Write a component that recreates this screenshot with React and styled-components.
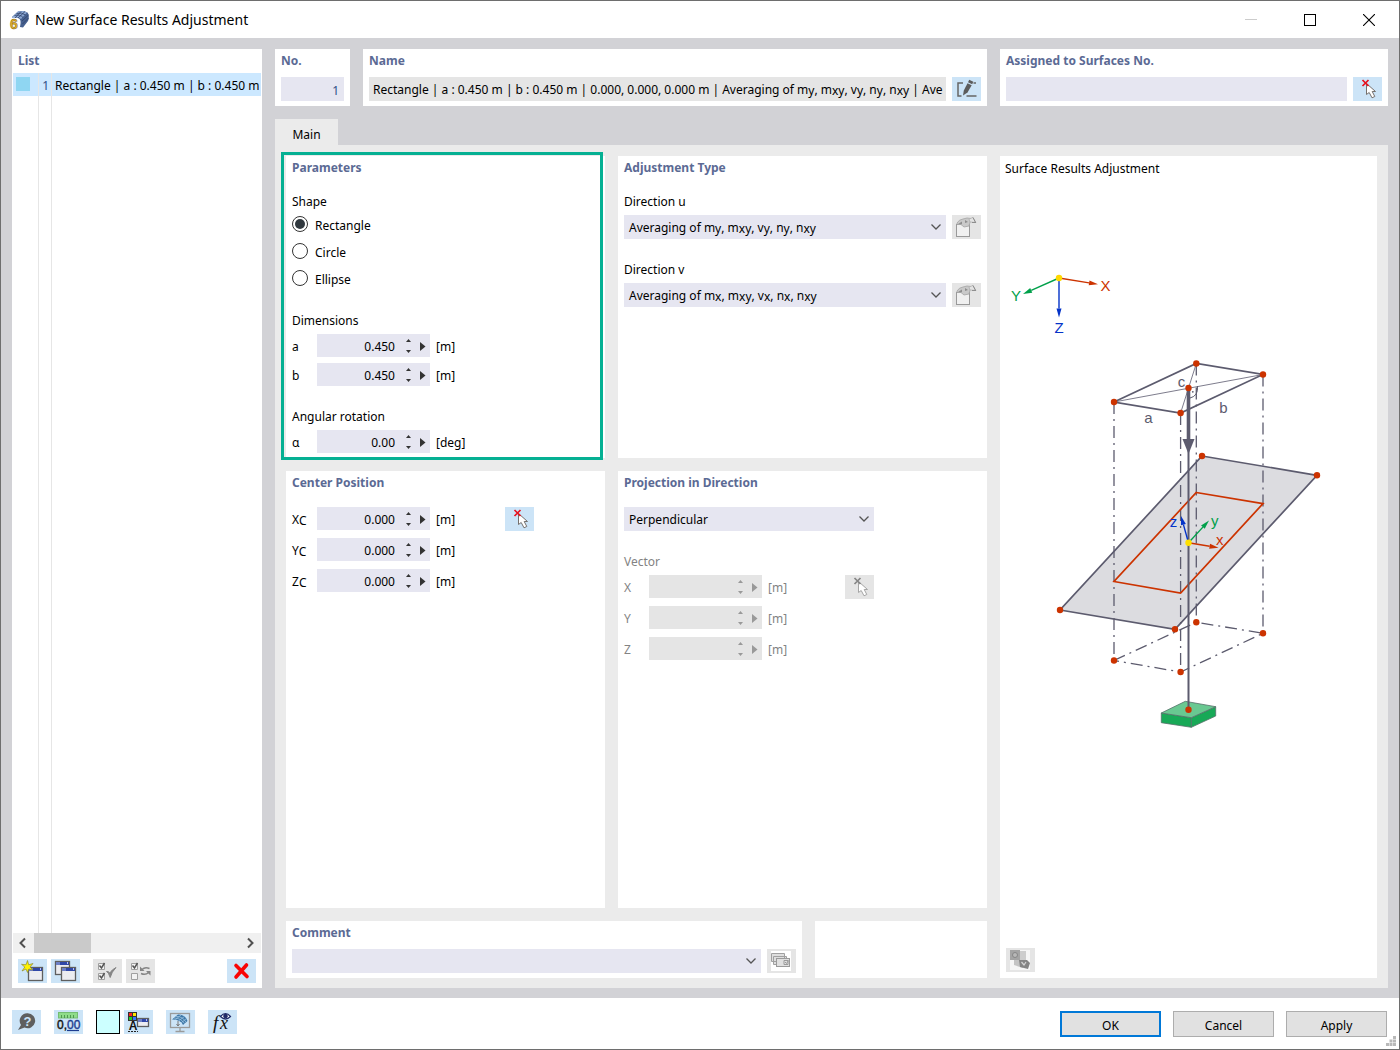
import React, { useState } from "react";
import styled, { createGlobalStyle, css } from "styled-components";

const color = {
  frame: "#6e6e6e",
  backdrop: "#d2d2d6",
  page: "#ebebeb",
  field: "#e6e6f1",
  disabled: "#e5e5e5",
  accent: "#cce4f7",
  heading: "#5b6a94",
  line: "#5c5b6e",
  red: "#cc3300",
  green: "#00a04a",
  blue: "#0433c8",
};

const GlobalStyle = createGlobalStyle`
  * { box-sizing: border-box; }
  body { margin: 0; }
  body, button, input, select {
    font-family: "Noto Sans", "Open Sans", sans-serif;
    font-size: 12px;
    line-height: 20px;
    color: #000;
  }
  svg { display: block; }
`;

const Window = styled.div`
  display: flex;
  flex-direction: column;
  min-height: 100vh;
  border: 1px solid ${color.frame};
  background: #fff;
`;

const TitleBar = styled.header`
  display: flex;
  align-items: center;
  height: 37px;
  padding: 0 7px 0 8px;
  gap: 5px;
`;

const Title = styled.h1`
  flex: 1;
  margin: 0;
  font-size: 14px;
  font-weight: 400;
`;

const CaptionButton = styled.button`
  display: grid;
  place-items: center;
  width: 46px;
  height: 36px;
  margin-left: 8px;
  padding: 0;
  border: 0;
  background: none;
`;

const Body = styled.main`
  flex: 1;
  display: grid;
  grid-template-columns: 250px 1fr;
  gap: 13px;
  padding: 11px 11px 10px;
  background: ${color.backdrop};
`;

const Editor = styled.div`
  display: flex;
  flex-direction: column;
  min-width: 0;
`;

const TopRow = styled.div`
  display: grid;
  grid-template-columns: 75px minmax(0, 624fr) minmax(0, 388fr);
  gap: 13px;
  margin-bottom: 13px;
`;

const Panel = styled.section`
  position: relative;
  min-width: 0;
  padding: 0 6px 5px;
  background: #fff;
  ${(p) =>
    p.$highlight &&
    css`
      &::after {
        content: "";
        position: absolute;
        inset: -4px 2px -2px -5px;
        border: 3px solid #05b093;
        pointer-events: none;
      }
    `}
`;

const Heading = styled.h2`
  margin: 0;
  font-size: 12px;
  line-height: 24px;
  font-weight: 700;
  color: ${color.heading};
  margin-bottom: ${(p) => (p.$wide ? "12px" : "4px")};
`;

const HeadingLabel = styled.label`
  display: block;
`;

const Line = styled.div`
  display: flex;
  gap: 6px;
`;

const TextInput = styled.input`
  flex: 1;
  min-width: 0;
  height: 24px;
  padding: 2px 5px 0;
  border: 0;
  border-radius: 0;
  background: ${color.field};
  text-align: ${(p) => (p.$number ? "right" : "left")};
  color: ${(p) => (p.$number ? "#2f4f86" : "#000")};
`;

const NameOutput = styled.output`
  flex: 1;
  min-width: 0;
  height: 24px;
  padding: 0 4px;
  line-height: 25px;
  background: ${color.disabled};
  white-space: nowrap;
  overflow: hidden;
`;

const IconButton = styled.button`
  flex: none;
  display: grid;
  place-items: center;
  width: 29px;
  height: 24px;
  padding: 0;
  border: 0;
  background: ${(p) => (p.disabled ? color.disabled : color.accent)};
`;

const Tabs = styled.div`
  display: flex;
`;

const Tab = styled.button`
  height: 26px;
  width: 63px;
  padding: 5px 0 0;
  border: 0;
  background: ${color.page};
`;

const Page = styled.div`
  flex: 1;
  display: grid;
  grid-template-columns: minmax(0, 701fr) minmax(0, 377fr);
  gap: 13px;
  padding: 11px 11px 10px;
  background: ${color.page};
`;

const Forms = styled.div`
  display: grid;
  grid-template-columns: minmax(0, 319fr) minmax(0, 369fr);
  grid-template-rows: auto 1fr auto;
  gap: 13px;
`;

const CommentRow = styled.div`
  grid-column: 1 / -1;
  display: grid;
  grid-template-columns: minmax(0, 516fr) minmax(0, 172fr);
  gap: 13px;
`;

const Caption = styled.div`
  display: block;
  margin-bottom: ${(p) => (p.$tight ? "0" : "3px")};
  color: ${(p) => (p.$muted ? "#838383" : "#000")};
`;

const Group = styled.div`
  margin-top: ${(p) => (p.$close ? "18px" : "21px")};
`;

const RadioLine = styled.label`
  display: flex;
  align-items: flex-start;
  gap: 7px;
  height: 27px;
  padding-top: 4px;
`;

const Radio = styled.input`
  appearance: none;
  display: grid;
  place-items: center;
  width: 16px;
  height: 16px;
  margin: 0;
  border: 1px solid #333;
  border-radius: 50%;
  &:checked::before {
    content: "";
    width: 10px;
    height: 10px;
    border-radius: 50%;
    background: #30383e;
  }
`;

const ValueRows = styled.div`
  display: grid;
  gap: ${(p) => (p.$dense ? "6px" : "8px")};
`;

const ValueLine = styled.div`
  display: grid;
  grid-template-columns: 25px 113px ${(p) => p.$unit || 75}px 29px;
  height: 23px;
  line-height: 26px;
  color: ${(p) => (p.$muted ? "#838383" : "#000")};
`;

const Unit = styled.span`
  padding-left: 6px;
`;

const SpinBox = styled.div`
  display: grid;
  grid-template-columns: 1fr 18px 13px;
  height: 23px;
  padding-top: 1px;
  background: ${(p) => (p.$disabled ? color.disabled : color.field)};
  color: ${(p) => (p.$disabled ? "#999" : "#333")};
`;

const SpinInput = styled.input`
  width: 100%;
  min-width: 0;
  height: 22px;
  padding: 0 4px 0 0;
  border: 0;
  background: transparent;
  text-align: right;
`;

const Steps = styled.div`
  display: grid;
  grid-template-rows: 11px 11px;
`;

const StepButton = styled.button`
  display: grid;
  place-items: center;
  padding: 0;
  border: 0;
  background: none;
  color: inherit;
`;

const SelectBox = styled.div`
  display: grid;
  flex: ${(p) => (p.$width ? "none" : 1)};
  width: ${(p) => (p.$width ? p.$width + "px" : "auto")};
  min-width: 0;
  height: 24px;
  background: ${color.field};
  & > * {
    grid-area: 1 / 1;
  }
  svg {
    justify-self: end;
    align-self: center;
    margin-right: 4px;
    pointer-events: none;
  }
`;

const Select = styled.select`
  appearance: none;
  width: 100%;
  height: 24px;
  padding: 2px 24px 0 5px;
  border: 0;
  border-radius: 0;
  background: transparent;
  color: ${(p) => (p.$rich ? "transparent" : "#000")};
  option {
    color: #000;
  }
`;

const SelectText = styled.span`
  padding-left: 5px;
  line-height: 26px;
  height: 24px;
  white-space: nowrap;
  overflow: hidden;
  pointer-events: none;
`;

const Sub = styled.sub`
  font-size: 12px;
  line-height: 0;
  vertical-align: -1px;
`;

const ListPanel = styled.section`
  display: flex;
  flex-direction: column;
  padding: 0 1px 5px;
  background: #fff;
  min-width: 0;
`;

const ListHeading = styled(Heading)`
  margin: 0;
  padding-left: 5px;
`;

const ListItems = styled.ul`
  flex: 1;
  display: flex;
  flex-direction: column;
  margin: 0;
  padding: 0;
  list-style: none;
`;

const ListRow = styled.li`
  display: grid;
  grid-template-columns: 26px 13px minmax(0, 1fr);
  ${(p) => (p.$filler ? "flex: 1;" : "height: 23px; line-height: 25px; background: #cce8ff;")}
`;

const ListCell = styled.span`
  border-right: ${(p) => (p.$last ? "0" : "1px solid #e6e6e6")};
  padding-left: ${(p) => (p.$last ? "3px" : "0")};
  color: ${(p) => (p.$index ? "#2f4f86" : "#000")};
  text-align: ${(p) => (p.$index ? "right" : "left")};
  padding-right: ${(p) => (p.$index ? "2px" : "0")};
  white-space: nowrap;
  overflow: hidden;
`;

const Swatch = styled.span`
  display: block;
  width: 14px;
  height: 14px;
  margin: 4px 0 0 3px;
  background: #8fd6f2;
`;

const ScrollBar = styled.div`
  display: grid;
  grid-template-columns: 21px 57px 1fr 21px;
  height: 20px;
  margin-bottom: 6px;
  background: #f0f0f0;
`;

const ScrollThumb = styled.div`
  background: #cacaca;
`;

const ListTools = styled.div`
  display: flex;
  gap: 4px;
  padding: 0 5px;
`;

const Gap = styled.span`
  ${(p) => (p.$grow ? "flex: 1;" : "width: 5px;")}
`;

const Preview = styled.section`
  display: flex;
  flex-direction: column;
  min-width: 0;
  padding-bottom: 6px;
  background: #fff;
`;

const PreviewTitle = styled.div`
  padding: 0 5px;
  line-height: 25px;
`;

const Drawing = styled.svg`
  flex: 1;
  width: 100%;
`;

const PreviewTools = styled.div`
  padding-left: 6px;
`;

const Footer = styled.footer`
  display: flex;
  gap: 13px;
  align-items: center;
  height: 51px;
  padding: 0 12px 3px 11px;
`;

const FooterPair = styled.div`
  display: flex;
  gap: 4px;
`;

const ColorButton = styled.button`
  width: 24px;
  height: 24px;
  padding: 0;
  border: 1px solid #000;
  background: #ccffff;
`;

const Actions = styled.div`
  flex: 1;
  display: flex;
  justify-content: flex-end;
  gap: 12px;
  padding-top: 4px;
`;

const ActionButton = styled.button`
  width: 101px;
  height: 26px;
  padding: 3px 0 0;
  border: ${(p) => (p.$primary ? "2px solid #0078d7" : "1px solid #adadad")};
  background: #e1e1e1;
`;

const Grip = styled.svg`
  position: absolute;
  right: 3px;
  bottom: 3px;
`;

const FooterArea = styled.div`
  position: relative;
`;

/* ---------- icons ---------- */

const AppIcon = () => (
  <svg width="21" height="20" viewBox="0 0 21 20">
    <path d="M3 7 L9 1.500 Q15 0 18.500 2.500 Q21 6 19 11 L14 17.500 L11 17 Q13 9 9 8Z" fill="#46608f" />
    <path d="M3 7 L9 1.500 Q15 0 18 2.500 L12 9 Q8 6 3 8Z" fill="#8ba7d3" />
    <path d="M5.500 5.500 Q11 4 14 7.500 M7.500 3.500 Q13 2 16.500 5 M6 8 L12 1.500 M9 8 L16 1.500 M13 11 L19.500 5 M13.500 14 L19.500 8" stroke="#2d4067" fill="none" strokeWidth=".8" />
    <text x="1" y="18.500" fontFamily="Liberation Sans, sans-serif" fontSize="14" fontWeight="700" fill="#e7b52b" stroke="#7b5c12" strokeWidth=".5">6</text>
  </svg>
);

const Pick = ({ off }) => (
  <svg width="29" height="24" viewBox="0 0 29 24">
    <path d="M13.500 6.500 V17.500 L16.200 15.500 L19 20.800 L21.800 19.500 L19.200 14.500 H22.500Z" fill="#fff" stroke={off ? "#a5a5a5" : "#75706d"} />
    <path d="M9.500 3 L15.500 9 M15.500 3 L9.500 9" stroke={off ? "#858585" : "#e8101c"} strokeWidth="1.700" />
  </svg>
);

const EditName = () => (
  <svg width="29" height="24" viewBox="0 0 29 24" fill="none" stroke="#666" strokeWidth="1.500">
    <path d="M11 6 H6 V19 H9.500 M21.500 6 H24 M14.500 19 H24.500" />
    <path d="M11 18.500 L11.800 13.500 L15.500 6.200 L19.700 8.200 L15.500 15.500Z" fill="#5c5c5c" stroke="none" />
    <path d="M16 5.200 L17.200 2.800 L21.300 4.800 L20.200 7.200Z" fill="#5c5c5c" stroke="none" />
  </svg>
);

const MiniWindow = ({ x, y, w = 14, h = 13 }) => (
  <g>
    <rect x={x + 0.5} y={y + 0.5} width={w - 1} height={h - 1} fill="#ececf0" stroke="#5e5e5e" strokeWidth="1.300" />
    <rect x={x + 1} y={y + 1} width={w - 2} height="3" fill="#3047a8" />
    <rect x={x + 1} y={y + 1} width="4" height="3" fill="#6d7fc6" />
    <rect x={x + w - 3} y={y + 1} width="1" height="2" fill="#b9c4ee" />
  </g>
);

const NewIcon = () => (
  <svg width="29" height="24" viewBox="0 0 29 24">
    <MiniWindow x={10} y={8} w={15} h={14} />
    <path d="M9.500 1.500 L10.700 5.800 L15 4.500 L12 8 L15 11 L10.800 10 L9.500 13.500 L8 10 L4 12 L6.800 8 L3.500 5.300 L8 5.800Z" fill="#fff200" stroke="#8d8a32" strokeWidth=".7" />
  </svg>
);

const CopyIcon = () => (
  <svg width="29" height="24" viewBox="0 0 29 24">
    <MiniWindow x={4} y={2} w={15} h={14} />
    <MiniWindow x={10} y={8} w={15} h={14} />
  </svg>
);

const CheckAllIcon = ({ swap }) => (
  <svg width="29" height="24" viewBox="0 0 29 24" fill="none" stroke="#a0a0a0">
    <path d="M5.500 4.500 h6 v6 h-6z M5.500 14.500 h6 v6 h-6z" fill="#f3f3f3" />
    <path d="M6.500 6.500 L8.500 9 L11.500 4" stroke="#555" strokeWidth="1.500" />
    {swap ? (
      <>
        <path d="M16 10.500 Q19 7.500 23.500 9.500 M22.500 13.500 Q19.500 16.500 15 14.500" stroke="#858585" strokeWidth="1.500" />
        <path d="M14 7.500 V12 H18.500Z M24.500 16.500 V12 H20Z" fill="#858585" stroke="none" />
      </>
    ) : (
      <>
        <path d="M6.500 16.500 L8.500 19 L11.500 14" stroke="#555" strokeWidth="1.500" />
        <path d="M13.500 12.500 Q15.500 13 17.200 18.500 Q18.500 13 23 8.500 Q19 10.500 16.800 14 Q15.500 12 13.500 12.500Z" fill="#858585" stroke="#858585" />
      </>
    )}
  </svg>
);

const DeleteIcon = () => (
  <svg width="29" height="24" viewBox="0 0 29 24">
    <path d="M9 6.500 L20 17.500 M19.500 6 L9 18" stroke="#f90505" strokeWidth="3.600" strokeLinecap="round" />
  </svg>
);

const HelpIcon = () => (
  <svg width="29" height="24" viewBox="0 0 29 24">
    <path d="M15.500 3.300 a7.500 7.500 0 1 1 -3 14.300 L6 20 L9 15 A7.500 7.500 0 0 1 15.500 3.300Z" fill="#5f5f5f" />
    <text x="15.500" y="15.500" textAnchor="middle" fontFamily="Liberation Sans, sans-serif" fontSize="13" fontWeight="700" fill="#cce4f7">?</text>
  </svg>
);

const UnitsIcon = () => (
  <svg width="29" height="24" viewBox="0 0 29 24">
    <rect x="4.500" y="2.500" width="19" height="5.500" fill="#8fdc8a" stroke="#74bd72" />
    <path d="M7.500 5 V8 M10.500 5 V8 M13.500 5 V8 M16.500 5 V8 M19.500 5 V8" stroke="#4f9a50" />
    <text x="3" y="19" fontFamily="Liberation Sans, sans-serif" fontSize="12" fill="#111" stroke="#111" strokeWidth=".4">0,<tspan fill="#1c3c90" stroke="#1c3c90">00</tspan></text>
    <path d="M13 20.500 H25" stroke="#1c3c90" strokeWidth="1.200" />
  </svg>
);

const DisplayIcon = () => (
  <svg width="29" height="24" viewBox="0 0 29 24">
    <rect x="4" y="2" width="9" height="9" fill="#333" />
    <rect x="5" y="3" width="3" height="3" fill="#f22" />
    <rect x="9" y="3" width="3" height="3" fill="#ffe600" />
    <rect x="5" y="7" width="3" height="3" fill="#2c2" />
    <rect x="9" y="7" width="3" height="3" fill="#37f" />
    <text x="9" y="20" textAnchor="middle" fontFamily="Liberation Sans, sans-serif" fontSize="12" fontWeight="700" fill="#111">A</text>
    <path d="M4 21.500 H14" stroke="#222" strokeDasharray="2 1" />
    <MiniWindow x={13} y={8} w={12} h={9} />
  </svg>
);

const MonitorIcon = () => (
  <svg width="29" height="24" viewBox="0 0 29 24">
    <rect x="4.500" y="3.500" width="19" height="14" fill="none" stroke="#9a9a9a" strokeWidth="1.300" />
    <path d="M14 18 V21 M9.500 21.500 H18.500" stroke="#9a9a9a" strokeWidth="1.300" />
    <path d="M6 9.500 L12 4.500 Q20 5 21.500 11 L17 15 Q15 9.500 6 9.500Z" fill="#3e78a8" />
    <path d="M8 8 Q15 8 18.500 13.500 M10 6.300 Q17 6.500 20 12.300 M9.500 9.500 L15 5 M13 10.500 L18.500 6.500 M15.500 12.500 L20.500 8.500" stroke="#a8cbe6" fill="none" strokeWidth=".7" />
    <path d="M12 11 V15.500 M10.500 14 L12 16 L13.500 14" stroke="#777" fill="none" />
  </svg>
);

const FormulaIcon = () => (
  <svg width="29" height="24" viewBox="0 0 29 24">
    <text x="5" y="19" fontFamily="Liberation Serif, serif" fontStyle="italic" fontSize="19" fill="#111">f</text>
    <text x="12" y="19" fontFamily="Liberation Serif, serif" fontStyle="italic" fontSize="18" fill="#111">x</text>
    <path d="M12.500 6.500 Q17.500 .5 22.500 6.500 Q17.500 11.500 12.500 6.500Z" fill="#fff" stroke="#1f2a68" strokeWidth="1.200" />
    <circle cx="17.500" cy="6" r="2.300" fill="#1f2a68" />
  </svg>
);

const BoxHandIcon = () => (
  <svg width="29" height="24" viewBox="0 0 29 24">
    <rect x="4.500" y="9.500" width="13" height="12" fill="#f0f0f0" stroke="#999" />
    <path d="M5 8 Q7 4.500 11 4 L15 3 L19 3.500 L18 7 L17 11 L12 12 L9 9.500 H5Z" fill="#c9c9c9" stroke="#a3a3a3" strokeWidth=".8" />
    <path d="M6 9 H10 V6.500Z M13 5 L16 7 L13 8Z" fill="#8e8e8e" />
    <path d="M17 4 L21 2.500 L24 7.500 L18 7Z" fill="#e3e3e3" stroke="#aaa" strokeWidth=".7" />
    <path d="M20 7.500 H24 M21 2.500 L23.500 7.500" stroke="#8e8e8e" />
  </svg>
);

const LayersIcon = () => (
  <svg width="29" height="24" viewBox="0 0 29 24">
    <rect x="4" y="2" width="20" height="20" fill="#fff" />
    <path d="M4.500 4.500 h13 v8 h-13z M6.500 7.500 h13 v8 h-13z" fill="#dedede" stroke="#a0a0a0" />
    <rect x="9.500" y="9.500" width="13" height="8" fill="#e0e0e0" stroke="#9a9a9a" />
    <path d="M17 11.500 h4 v4 h-4z M18 13 l1.500 1.500 l2 -3" fill="none" stroke="#9a9a9a" />
  </svg>
);

const SnapshotIcon = () => (
  <svg width="29" height="24" viewBox="0 0 29 24">
    <rect x="4" y="2" width="20" height="20" fill="#f6f6f6" />
    <rect x="4" y="2" width="10" height="10" fill="#a4a4a4" />
    <rect x="14" y="3" width="6" height="9" fill="#cdcdcd" />
    <circle cx="9" cy="7" r="2.500" fill="#b8b8b8" stroke="#868686" />
    <path d="M8 12 H17 V20 L8 17Z" fill="#c4c4c4" />
    <path d="M13 12 L21 12 L24 15 L22 21 L14 19Z" fill="#858585" />
    <path d="M15.500 14 L18 17 L20 14" stroke="#d6d6d6" strokeWidth="1.200" fill="none" />
  </svg>
);

const Chevron = () => (
  <svg width="12" height="8" viewBox="0 0 12 8" fill="none" stroke="#555" strokeWidth="1.300">
    <path d="M1.500 1.500 L6 6 L10.500 1.500" />
  </svg>
);

const ScrollArrow = ({ right }) => (
  <svg width="21" height="20" viewBox="0 0 21 20" fill="none" stroke="#505050" strokeWidth="2">
    <path d={right ? "M8 5.500 L12.500 10 L8 14.500" : "M12 5.500 L7.500 10 L12 14.500"} />
  </svg>
);

/* ---------- controls ---------- */

function Spin({ id, value, disabled }) {
  const [v, setV] = useState(value);
  return (
    <SpinBox $disabled={disabled}>
      <SpinInput id={id} value={v} disabled={disabled} onChange={(e) => setV(e.target.value)} />
      <Steps>
        <StepButton disabled={disabled} aria-label="Increase">
          <svg width="5" height="3" viewBox="0 0 5 3" fill="currentColor"><path d="M0 3 L2.500 0 L5 3Z" /></svg>
        </StepButton>
        <StepButton disabled={disabled} aria-label="Decrease">
          <svg width="5" height="3" viewBox="0 0 5 3" fill="currentColor"><path d="M0 0 L2.500 3 L5 0Z" /></svg>
        </StepButton>
      </Steps>
      <StepButton disabled={disabled} aria-label="More">
        <svg width="7" height="9" viewBox="0 0 7 9" fill="currentColor"><path d="M0 0 L5.500 4.500 L0 9Z" /></svg>
      </StepButton>
    </SpinBox>
  );
}

function Value({ id, label, value = "", unit = "m", unitWidth, disabled, button }) {
  return (
    <ValueLine $unit={unitWidth} $muted={disabled}>
      <label htmlFor={id}>{label}</label>
      <Spin id={id} value={value} disabled={disabled} />
      <Unit>[{unit}]</Unit>
      {button}
    </ValueLine>
  );
}

const Components = ({ axis }) => (
  <>
    Averaging of m<Sub>{axis}</Sub>, m<Sub>xy</Sub>, v<Sub>{axis}</Sub>, n<Sub>{axis}</Sub>, n<Sub>xy</Sub>
  </>
);

function AveragingSelect({ id, axis }) {
  return (
    <Line>
      <SelectBox>
        <Select id={id} $rich>
          <option>{`Averaging of m${axis}, mxy, v${axis}, n${axis}, nxy`}</option>
        </Select>
        <SelectText aria-hidden="true"><Components axis={axis} /></SelectText>
        <Chevron />
      </SelectBox>
      <IconButton disabled aria-label="Edit averaging"><BoxHandIcon /></IconButton>
    </Line>
  );
}

/* ---------- preview drawing ---------- */

const Node = ({ at }) => <circle cx={at[0]} cy={at[1]} r="3.200" fill={color.red} />;

function Arrow({ from, to, stroke, width = 1.4, head = 9, half = 2.5 }) {
  const dx = to[0] - from[0];
  const dy = to[1] - from[1];
  const len = Math.hypot(dx, dy);
  const ux = dx / len;
  const uy = dy / len;
  const bx = to[0] - ux * head;
  const by = to[1] - uy * head;
  return (
    <g>
      <line x1={from[0]} y1={from[1]} x2={bx} y2={by} stroke={stroke} strokeWidth={width} />
      <polygon
        points={`${to[0]},${to[1]} ${bx - uy * half},${by + ux * half} ${bx + uy * half},${by - ux * half}`}
        fill={stroke}
      />
    </g>
  );
}

const top = [[1114, 402], [1196.3, 363.5], [1263, 374.5], [1180.6, 413]];
const bottom = [[1114, 660.5], [1196.3, 622.2], [1263, 633.3], [1180.6, 672]];
const plane = [[1202, 456], [1317, 475.3], [1175, 629.3], [1060, 610]];
const patch = [[1196.3, 492.5], [1263, 503.6], [1180.6, 593], [1114, 581.5]];
const points = (list) => list.map((p) => p.join(",")).join(" ");

const AdjustmentDrawing = () => (
  <Drawing viewBox="1000 181 377 767" role="img" aria-label="Surface results adjustment geometry" fontFamily="Liberation Sans, Arial, sans-serif" fontSize="15" textAnchor="middle">
    <Arrow from={[1059, 278]} to={[1098, 284.3]} stroke={color.red} />
    <Arrow from={[1059, 278]} to={[1023, 294]} stroke={color.green} />
    <Arrow from={[1059, 278]} to={[1059, 317.5]} stroke={color.blue} />
    <circle cx="1059" cy="278" r="3.200" fill="#ffd800" />
    <text x="1105.500" y="291" fill={color.red}>X</text>
    <text x="1016" y="301" fill={color.green}>Y</text>
    <text x="1059" y="333" fill={color.blue}>Z</text>

    <polygon points={points(plane)} fill="#dcdce0" stroke={color.line} strokeWidth="1.700" />
    <g fill="none" stroke={color.line} strokeWidth="1.300" strokeDasharray="12 5 2 5">
      {top.map((p, i) => (
        <line key={i} x1={p[0]} y1={p[1]} x2={bottom[i][0]} y2={bottom[i][1]} />
      ))}
      <polygon points={points(bottom)} />
    </g>
    <polygon points={points(patch)} fill="none" stroke={color.red} strokeWidth="1.700" />
    <path d="M1114 402 L1263 374.500 M1196.300 363.500 L1180.600 413" stroke={color.line} strokeWidth=".8" />
    <polygon points={points(top)} fill="none" stroke={color.line} strokeWidth="1.700" />
    <path d="M1197.500 386 Q1198.500 396 1190 398" fill="none" stroke={color.line} />
    <circle cx="1192.800" cy="391.800" r=".9" fill={color.line} />

    <polygon points="1161.300,713 1191.300,717.700 1191.300,727.300 1161.300,722.700" fill="#18a957" stroke="#56706a" strokeWidth=".8" />
    <polygon points="1191.300,717.700 1215.700,706.700 1215.700,716 1191.300,727.300" fill="#18a957" stroke="#56706a" strokeWidth=".8" />
    <polygon points="1161.300,713 1185.300,701.300 1215.700,706.700 1191.300,717.700" fill="#69c891" stroke="#56706a" strokeWidth=".8" />
    <line x1="1188.500" y1="440" x2="1188.500" y2="709" stroke={color.line} strokeWidth="2" />
    <Arrow from={[1188.5, 388]} to={[1188.5, 454]} stroke={color.line} width={3.6} head={15} half={6} />

    <Arrow from={[1188.5, 542.7]} to={[1218.5, 547.7]} stroke={color.red} />
    <Arrow from={[1188.5, 542.7]} to={[1209, 520.5]} stroke={color.green} />
    <Arrow from={[1188.5, 542.7]} to={[1181, 516]} stroke={color.blue} />
    <circle cx="1188.500" cy="542.700" r="3.200" fill="#ffe000" />
    <text x="1173.500" y="527" fill={color.blue}>z</text>
    <text x="1214.700" y="525.500" fill={color.green}>y</text>
    <text x="1219.700" y="545" fill={color.red}>x</text>

    {[...top, ...bottom, ...plane, [1188.5, 388], [1188.5, 709.8]].map((p, i) => <Node key={i} at={p} />)}
    <text x="1148.500" y="422.500" fill={color.line}>a</text>
    <text x="1223.500" y="412.500" fill={color.line}>b</text>
    <text x="1181.500" y="387" fill={color.line}>c</text>
  </Drawing>
);

export default function App() {
  const [shape, setShape] = useState("Rectangle");
  const [number, setNumber] = useState("1");
  return (
    <>
      <GlobalStyle />
      <Window>
        <TitleBar>
          <AppIcon />
          <Title>New Surface Results Adjustment</Title>
          <CaptionButton aria-label="Minimize" disabled>
            <svg width="12" height="12" viewBox="0 0 12 12"><path d="M0 5.500 H12" stroke="#ccc" /></svg>
          </CaptionButton>
          <CaptionButton aria-label="Maximize">
            <svg width="12" height="12" viewBox="0 0 12 12"><rect x=".5" y=".5" width="11" height="11" fill="none" stroke="#000" /></svg>
          </CaptionButton>
          <CaptionButton aria-label="Close">
            <svg width="12" height="12" viewBox="0 0 12 12"><path d="M0 0 L12 12 M12 0 L0 12" stroke="#000" strokeWidth="1.100" /></svg>
          </CaptionButton>
        </TitleBar>

        <Body>
          <ListPanel>
            <ListHeading>List</ListHeading>
            <ListItems>
              <ListRow>
                <ListCell><Swatch /></ListCell>
                <ListCell $index>1</ListCell>
                <ListCell $last>Rectangle | a : 0.450 m | b : 0.450 m</ListCell>
              </ListRow>
              <ListRow $filler aria-hidden="true">
                <ListCell />
                <ListCell />
                <ListCell $last />
              </ListRow>
            </ListItems>
            <ScrollBar>
              <StepButton aria-label="Scroll left"><ScrollArrow /></StepButton>
              <ScrollThumb />
              <span />
              <StepButton aria-label="Scroll right"><ScrollArrow right /></StepButton>
            </ScrollBar>
            <ListTools>
              <IconButton aria-label="New"><NewIcon /></IconButton>
              <IconButton aria-label="Copy"><CopyIcon /></IconButton>
              <Gap />
              <IconButton aria-label="Select all" disabled><CheckAllIcon /></IconButton>
              <IconButton aria-label="Invert selection" disabled><CheckAllIcon swap /></IconButton>
              <Gap $grow />
              <IconButton aria-label="Delete"><DeleteIcon /></IconButton>
            </ListTools>
          </ListPanel>

          <Editor>
            <TopRow>
              <Panel>
                <Heading><HeadingLabel htmlFor="no">No.</HeadingLabel></Heading>
                <Line><TextInput id="no" $number value={number} onChange={(e) => setNumber(e.target.value)} /></Line>
              </Panel>
              <Panel>
                <Heading><HeadingLabel htmlFor="name">Name</HeadingLabel></Heading>
                <Line>
                  <NameOutput id="name">
                    Rectangle | a : 0.450 m | b : 0.450 m | 0.000, 0.000, 0.000 m | <Components axis="y" /> | Ave
                  </NameOutput>
                  <IconButton aria-label="Edit name"><EditName /></IconButton>
                </Line>
              </Panel>
              <Panel>
                <Heading><HeadingLabel htmlFor="surfaces">Assigned to Surfaces No.</HeadingLabel></Heading>
                <Line>
                  <TextInput id="surfaces" />
                  <IconButton aria-label="Pick surfaces"><Pick /></IconButton>
                </Line>
              </Panel>
            </TopRow>

            <Tabs role="tablist"><Tab role="tab" aria-selected="true">Main</Tab></Tabs>

            <Page>
              <Forms>
                <Panel $highlight>
                  <Heading $wide>Parameters</Heading>
                  <Caption $tight>Shape</Caption>
                  <div role="radiogroup" aria-label="Shape">
                    {["Rectangle", "Circle", "Ellipse"].map((s) => (
                      <RadioLine key={s}>
                        <Radio type="radio" name="shape" checked={shape === s} onChange={() => setShape(s)} />
                        {s}
                      </RadioLine>
                    ))}
                  </div>
                  <Group $close>
                    <Caption>Dimensions</Caption>
                    <ValueRows $dense>
                      <Value id="dim-a" label="a" value="0.450" />
                      <Value id="dim-b" label="b" value="0.450" />
                    </ValueRows>
                  </Group>
                  <Group>
                    <Caption>Angular rotation</Caption>
                    <Value id="alpha" label="α" value="0.00" unit="deg" />
                  </Group>
                </Panel>

                <Panel>
                  <Heading $wide>Adjustment Type</Heading>
                  <Caption as="label" htmlFor="dir-u">Direction u</Caption>
                  <AveragingSelect id="dir-u" axis="y" />
                  <Group>
                    <Caption as="label" htmlFor="dir-v">Direction v</Caption>
                    <AveragingSelect id="dir-v" axis="x" />
                  </Group>
                </Panel>

                <Panel>
                  <Heading $wide>Center Position</Heading>
                  <ValueRows>
                    <Value id="xc" label={<>X<Sub>C</Sub></>} value="0.000" button={<IconButton aria-label="Pick center"><Pick /></IconButton>} />
                    <Value id="yc" label={<>Y<Sub>C</Sub></>} value="0.000" />
                    <Value id="zc" label={<>Z<Sub>C</Sub></>} value="0.000" />
                  </ValueRows>
                </Panel>

                <Panel>
                  <Heading $wide>Projection in Direction</Heading>
                  <SelectBox $width={250}>
                    <Select aria-label="Projection in Direction">
                      <option>Perpendicular</option>
                    </Select>
                    <Chevron />
                  </SelectBox>
                  <Group>
                    <Caption $muted>Vector</Caption>
                    <ValueRows>
                      <Value id="vx" label="X" unitWidth={83} disabled button={<IconButton aria-label="Pick vector" disabled><Pick off /></IconButton>} />
                      <Value id="vy" label="Y" unitWidth={83} disabled />
                      <Value id="vz" label="Z" unitWidth={83} disabled />
                    </ValueRows>
                  </Group>
                </Panel>

                <CommentRow>
                  <Panel>
                    <Heading><HeadingLabel htmlFor="comment">Comment</HeadingLabel></Heading>
                    <Line>
                      <SelectBox>
                        <Select id="comment"><option></option></Select>
                        <Chevron />
                      </SelectBox>
                      <IconButton aria-label="Comment templates" disabled><LayersIcon /></IconButton>
                    </Line>
                  </Panel>
                  <Panel />
                </CommentRow>
              </Forms>

              <Preview>
                <PreviewTitle>Surface Results Adjustment</PreviewTitle>
                <AdjustmentDrawing />
                <PreviewTools>
                  <IconButton aria-label="Preview options" disabled><SnapshotIcon /></IconButton>
                </PreviewTools>
              </Preview>
            </Page>
          </Editor>
        </Body>

        <FooterArea>
          <Footer>
            <IconButton aria-label="Help"><HelpIcon /></IconButton>
            <IconButton aria-label="Units"><UnitsIcon /></IconButton>
            <FooterPair>
              <ColorButton aria-label="Color" />
              <IconButton aria-label="Display properties"><DisplayIcon /></IconButton>
            </FooterPair>
            <IconButton aria-label="View"><MonitorIcon /></IconButton>
            <IconButton aria-label="Formula"><FormulaIcon /></IconButton>
            <Actions>
              <ActionButton $primary>OK</ActionButton>
              <ActionButton>Cancel</ActionButton>
              <ActionButton>Apply</ActionButton>
            </Actions>
          </Footer>
          <Grip width="10" height="10" viewBox="0 0 10 10" fill="#b9b9b9">
            <path d="M7 0h3v3h-3z M3.500 3.500h3v3h-3z M7 3.500h3v3h-3z M0 7h3v3h-3z M3.500 7h3v3h-3z M7 7h3v3h-3z" />
          </Grip>
        </FooterArea>
      </Window>
    </>
  );
}
